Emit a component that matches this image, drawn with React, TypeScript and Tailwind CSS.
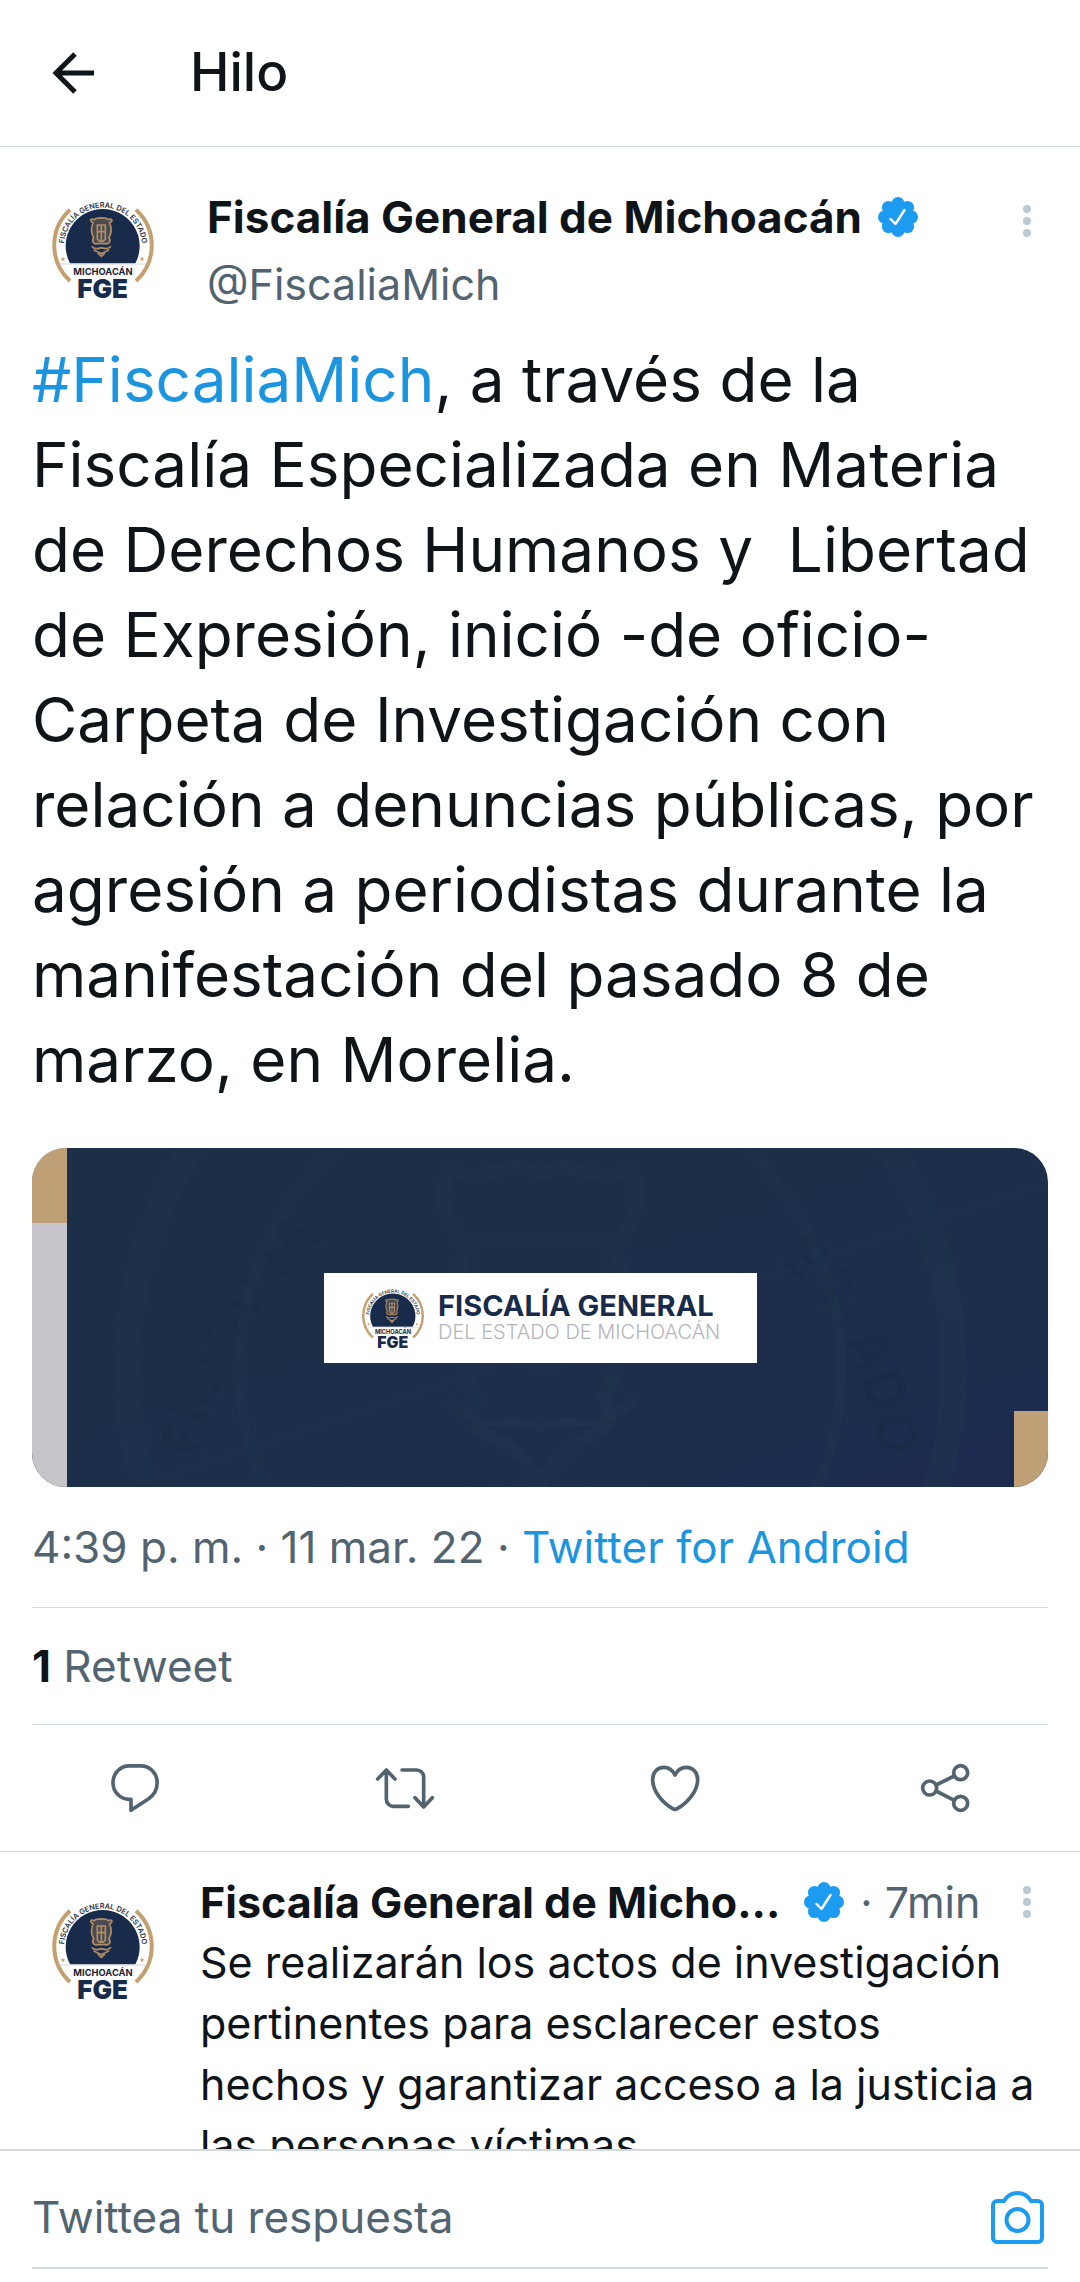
import type { ReactNode } from "react";

function Seal({ className }: { className: string }) {
  return (
    <svg viewBox="58 44 324 324" className={className} role="img" aria-label="FGE Michoacán">
      <defs>
        <path id="seal-arc" d="M105 220A117 117 0 1 1 335 220" />
      </defs>
      <g fill="none" stroke="#c3a06f" strokeWidth="12">
        <path d="M121 88C58 146 58 244 121 302" />
        <path d="M319 88C382 146 382 244 319 302" />
      </g>
      <path d="M121 249A111 111 0 1 1 317 249Z" fill="#182b4b" />
      <path d="M84 251H356" stroke="#b9bec8" strokeWidth="2" />
      <text fill="#2b3240" fontSize="22" fontWeight="600" textAnchor="middle">
        <textPath href="#seal-arc" startOffset="50%">FISCALÍA GENERAL DEL ESTADO</textPath>
      </text>
      <g fill="#c3a06f">
        <path d="M100 229l2 5h5l-4 4 2 5-5-3-5 3 2-5-4-4h5z" />
        <path d="M337 229l2 5h5l-4 4 2 5-5-3-5 3 2-5-4-4h5z" />
      </g>
      <g fill="none" stroke="#b08d65" strokeWidth="5">
        <path d="M190 128c-12-8-6-16 4-10 6-8 14-2 21-6 7 4 15-2 21 6 10-6 16 2 4 10 6 14 6 30-2 44 8 12-2 20-10 18H202c-8 2-18-6-10-18-8-14-8-30-2-44z" fill="#4a4a50" />
        <path d="M203 134h24v42c-6 10-18 10-24 0zM203 154h24M215 134v48" />
        <path d="M186 198c10 12 20 6 29 4 9 2 19 8 29-4M192 208c8 8 14 4 23 12 9-8 15-4 23-12M204 218l11 10 11-10" />
      </g>
      <text x="220" y="284" fill="#1d2433" fontSize="28" fontWeight="700" textAnchor="middle">
        MICHOACÁN
      </text>
      <text x="219" y="354" fill="#182b4b" fontSize="78" fontWeight="900" textAnchor="middle">
        FGE
      </text>
    </svg>
  );
}

function VerifiedBadge() {
  return (
    <svg viewBox="0 0 40 40" className="h-10 w-10 shrink-0" role="img" aria-label="Cuenta verificada">
      <g fill="#1d9bf0">
        <circle cx="20" cy="20" r="16" />
        <circle cx="20" cy="6.6" r="6.6" />
        <circle cx="20" cy="33.4" r="6.6" />
        <circle cx="6.6" cy="20" r="6.6" />
        <circle cx="33.4" cy="20" r="6.6" />
        <circle cx="10.5" cy="10.5" r="6.6" />
        <circle cx="29.5" cy="10.5" r="6.6" />
        <circle cx="10.5" cy="29.5" r="6.6" />
        <circle cx="29.5" cy="29.5" r="6.6" />
      </g>
      <path d="M12.5 22l5 5 9-14" fill="none" stroke="#fff" strokeWidth="2.4" strokeLinecap="round" strokeLinejoin="round" />
    </svg>
  );
}

function MoreButton() {
  return (
    <button type="button" aria-label="Más opciones" className="h-8 w-2 shrink-0">
      <svg viewBox="0 0 8 32" className="h-8 w-2" fill="#b9cad3">
        <circle cx="4" cy="4" r="4" />
        <circle cx="4" cy="16" r="4" />
        <circle cx="4" cy="28" r="4" />
      </svg>
    </button>
  );
}

function Action({ label, viewBox, children }: { label: string; viewBox: string; children: ReactNode }) {
  return (
    <button type="button" aria-label={label} className="flex items-center justify-center text-[#536471]">
      <svg
        viewBox={viewBox}
        className="h-15 w-15"
        fill="none"
        stroke="currentColor"
        strokeWidth="11"
        strokeLinecap="round"
        strokeLinejoin="round"
      >
        {children}
      </svg>
    </button>
  );
}

function Watermark() {
  return (
    <svg viewBox="0 0 946 338" preserveAspectRatio="xMidYMid slice" className="absolute inset-0 h-full w-full" aria-hidden="true">
      <defs>
        <path id="mark-arc" d="M132 330A342 342 0 0 1 814 330" />
      </defs>
      <g fill="none" stroke="#213650" strokeOpacity="0.35">
        <circle cx="473" cy="220" r="412" strokeWidth="26" />
        <circle cx="473" cy="220" r="300" strokeWidth="10" />
        <path
          d="M385 20c30 22 50-14 88 6 38-20 58 16 88-6 22 30 0 60-14 80 20 50 10 110-10 150 10 20 0 30-14 38-20 6-40 30-50 48-10-18-30-42-50-48-14-8-24-18-14-38-20-40-30-100-10-150-14-20-36-50-14-80z"
          strokeWidth="14"
        />
        <path d="M410 90h126v90c-20 50-100 50-126 0zM380 250c40 44 60 10 93 30 33-20 53 14 93-30" strokeWidth="8" />
      </g>
      <g fill="#16263f" fillOpacity="0.18" fontSize="56" fontWeight="700">
        <text>
          <textPath href="#mark-arc" startOffset="2%">FISCALÍA</textPath>
        </text>
        <text textAnchor="end">
          <textPath href="#mark-arc" startOffset="98%">ESTADO</textPath>
        </text>
      </g>
    </svg>
  );
}

function MediaCard() {
  return (
    <div className="flex h-[339px] overflow-hidden rounded-[34px] bg-linear-to-br from-[#1c2f48] via-[#1c2f4a] to-[#1c2b50]">
      <div className="flex w-[35px] flex-col bg-[#c8c5ca]">
        <div className="h-[75px] bg-[#bf9f76]" />
      </div>
      <div className="relative flex flex-1 items-center justify-center">
        <Watermark />
        <div className="relative flex h-[90px] w-[433px] items-center gap-3 bg-white pl-9">
          <Seal className="h-[66px] w-[66px] shrink-0" />
          <div className="whitespace-nowrap">
            <p className="text-[29px] leading-7 font-bold text-[#182b4b]">FISCALÍA GENERAL</p>
            <p className="text-[20px] leading-6 font-light text-[#b4b4bc]">DEL ESTADO DE MICHOACÁN</p>
          </div>
        </div>
      </div>
      <div className="flex w-[34px] flex-col justify-end">
        <div className="h-[76px] bg-[#bf9f76]" />
      </div>
    </div>
  );
}

export default function App() {
  return (
    <div className="flex h-screen flex-col overflow-hidden bg-white font-['Inter','Liberation_Sans',sans-serif] text-[#0f1419]">
      <header className="flex h-[147px] shrink-0 items-center gap-24 border-b border-[#cfd9de] pl-[52px]">
        <button type="button" aria-label="Atrás">
          <svg viewBox="0 0 42 42" className="h-[42px] w-[42px]" fill="none" stroke="currentColor" strokeWidth="5">
            <path d="M42 21H4M23 2L4 21L23 40" />
          </svg>
        </button>
        <h1 className="text-[53px] font-medium">Hilo</h1>
      </header>

      <main className="min-h-0 flex-1 overflow-hidden">
        <article>
          <div className="px-8">
            <div className="flex pt-12">
              <Seal className="ml-[17px] h-[108px] w-[108px] shrink-0" />
              <div className="ml-[50px] flex-1">
                <div className="flex items-center">
                  <h2 className="text-[44px] leading-[44px] font-bold whitespace-nowrap">Fiscalía General de Michoacán</h2>
                  <span className="ml-4">
                    <VerifiedBadge />
                  </span>
                </div>
                <p className="mt-5 text-[43px] leading-[50px] text-[#536471]">@FiscaliaMich</p>
              </div>
              <div className="mt-[10px] mr-[17px]">
                <MoreButton />
              </div>
            </div>

            <p className="mt-7 text-[62px] leading-[85px] whitespace-nowrap">
              <a href="#fiscaliamich" className="text-[#1b95e0]">#FiscaliaMich</a>, a través de la
              <br />
              Fiscalía Especializada en Materia
              <br />
              de Derechos Humanos y&nbsp; Libertad
              <br />
              de Expresión, inició -de oficio-
              <br />
              Carpeta de Investigación con
              <br />
              relación a denuncias públicas, por
              <br />
              agresión a periodistas durante la
              <br />
              manifestación del pasado 8 de
              <br />
              marzo, en Morelia.
            </p>

            <div className="mt-[46px]">
              <MediaCard />
            </div>

            <p className="border-b border-[#cfd9de] pt-[30px] pb-[30px] text-[44px] leading-[60px] whitespace-nowrap text-[#536471]">
              4:39 p. m. · 11 mar. 22 ·{" "}
              <a href="#source" className="text-[#1b95e0]">Twitter for Android</a>
            </p>
            <p className="border-b border-[#cfd9de] py-7 text-[44px] leading-[60px] text-[#536471]">
              <strong className="font-bold text-[#0f1419]">1</strong> Retweet
            </p>
          </div>

          <div className="grid h-[127px] grid-cols-4 border-b border-[#cfd9de]">
            <Action label="Responder" viewBox="45 54 180 180">
              <path d="M118 77.5H152C180 77.5 201.5 100 201.5 128C201.5 150 190 166 176 176L123 211V178H119C91 178 69 156 69 128C69 100 91 77.5 118 77.5Z" />
            </Action>
            <Action label="Retwittear" viewBox="855 54 180 180">
              <path d="M863 117L889 90L915 117M889 90V178A21 21 0 0 0 910 199H955M936 90H980A21 21 0 0 1 1001 111V201M975 173L1001 201L1027 173" />
            </Action>
            <Action label="Me gusta" viewBox="75 54 180 180">
              <path d="M165 105C158 90 146 82 131 82C112 82 98 97 98 119C98 152 125 187 158 206Q165 210 172 206C205 187 233 152 233 119C233 97 218 82 199 82C184 82 172 90 165 105Z" />
            </Action>
            <Action label="Compartir" viewBox="885 54 180 180">
              <circle cx="929" cy="144" r="21" />
              <circle cx="1022" cy="98" r="21" />
              <circle cx="1022" cy="190" r="21" />
              <path d="M948 135L1003 108M948 153L1003 181" />
            </Action>
          </div>
        </article>

        <article className="flex">
          <Seal className="mt-11 ml-[49px] h-[108px] w-[108px] shrink-0" />
          <div className="ml-[43px] min-w-0 flex-1 pt-5">
            <div className="flex items-center pr-[49px]">
              <h2 className="text-[43px] leading-[60px] font-bold whitespace-nowrap">Fiscalía General de Micho...</h2>
              <span className="mr-4 ml-6">
                <VerifiedBadge />
              </span>
              <span className="flex-1 text-[43px] leading-[60px] whitespace-nowrap text-[#536471]">· 7min</span>
              <MoreButton />
            </div>
            <p className="text-[43px] leading-[61px] whitespace-nowrap">
              Se realizarán los actos de investigación
              <br />
              pertinentes para esclarecer estos
              <br />
              hechos y garantizar acceso a la justicia a
              <br />
              las personas víctimas.
            </p>
          </div>
        </article>
      </main>

      <footer className="h-[133px] shrink-0 border-t-2 border-[#cfd9de] px-8">
        <form className="flex h-[118px] items-center border-b-2 border-[#cfd9de] pt-4 pr-1">
          <input
            type="text"
            aria-label="Twittea tu respuesta"
            placeholder="Twittea tu respuesta"
            className="min-w-0 flex-1 text-[44px] leading-[60px] outline-none placeholder:text-[#536471] placeholder:opacity-100"
          />
          <button type="button" aria-label="Añadir foto" className="text-[#1d9bf0]">
            <svg viewBox="0 0 53 53" className="h-[53px] w-[53px]" fill="none" stroke="currentColor" strokeWidth="4" strokeLinejoin="round">
              <path d="M6 51H47A4 4 0 0 0 51 47V14A4 4 0 0 0 47 10H40C37 5 32 2 26.5 2S16 5 13 10H6A4 4 0 0 0 2 14V47A4 4 0 0 0 6 51Z" />
              <circle cx="26.5" cy="29" r="11" />
            </svg>
          </button>
        </form>
      </footer>
    </div>
  );
}
